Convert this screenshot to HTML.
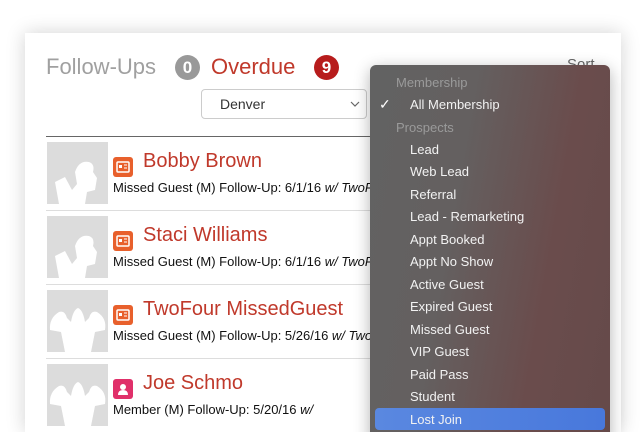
<!DOCTYPE html>
<html style="width:644px;height:432px;overflow:hidden"><head><style>
body{margin:0;width:644px;height:432px;overflow:hidden;background:#fff;font-family:"Liberation Sans",sans-serif;position:relative}
.card{position:absolute;left:25px;top:33px;width:596px;height:399px;background:#fff;box-shadow:0 0 18px rgba(0,0,0,.18)}
.t{position:absolute;top:54px;font-size:22px}
.badge{position:absolute;top:55px;width:25px;height:25px;border-radius:50%;color:#fff;font-weight:bold;font-size:17px;text-align:center;line-height:25px}
.sel{position:absolute;left:201px;top:89px;width:166px;height:30px;border:1px solid #ccc;border-radius:4px;box-sizing:border-box;font-size:14px;color:#333;padding:6px 0 0 18px}
.hr{position:absolute;left:46px;top:136px;width:330px;height:1px;background:#666}
.row{position:absolute;left:46px;width:330px;height:70px}
.img{position:absolute;left:1px;top:0;width:61px;height:62px;background:#dcdcdc;overflow:hidden}
.ic{position:absolute;left:67px;top:15px;width:20px;height:20px;border-radius:3px}
.nm{position:absolute;left:97px;top:8px;font-size:20px;color:#c0392b;white-space:nowrap}
.dt{position:absolute;left:67px;top:38px;font-size:13px;color:#111;white-space:nowrap}
.sep{position:absolute;left:0;top:68px;width:330px;height:1px;background:#ddd}
.menu{position:absolute;left:370px;top:65px;width:240px;height:380px;border-radius:6px;background:linear-gradient(100deg,#626262 0%,#646060 35%,#6a4c4c 70%,#654a4a 100%);box-shadow:0 4px 16px rgba(0,0,0,.3)}
.mi{position:absolute;left:40px;font-size:13px;color:#f2f2f2;white-space:nowrap}
.mh{position:absolute;left:26px;font-size:13px;color:#9a9a9a}
</style></head><body>
<div class="card"></div>
<div class="t" style="left:46px;color:#a0a0a0">Follow-Ups</div>
<div class="badge" style="left:175px;background:#999">0</div>
<div class="t" style="left:211px;color:#c0392b">Overdue</div>
<div class="badge" style="left:314px;background:#b71c1c">9</div>
<div style="position:absolute;left:567px;top:56px;font-size:15px;color:#666">Sort</div>
<div class="sel">Denver<svg style="position:absolute;right:6px;top:11px" width="10" height="6"><path d="M1 1 L5 5 L9 1" stroke="#666" fill="none" stroke-width="1.2"/></svg></div>
<div class="hr"></div>

<div class="row" style="top:142px"><div class="img"><svg width="61" height="62"><path d="M12 62 L8 40 L18 35 L25 48 L30 42 L28 30 Q32 18 42 20 Q48 22 46 30 L50 36 L48 48 L40 50 L38 62Z" fill="#fff"/></svg></div><div class="ic" style="background:#e8602c"><svg width="20" height="20"><rect x="4" y="5" width="12" height="10" rx="1" fill="none" stroke="#fff" stroke-width="1.5"/><rect x="6" y="8" width="3" height="3" fill="#fff"/><path d="M11 8h3M11 11h3" stroke="#fff"/></svg></div><div class="nm">Bobby Brown</div><div class="dt">Missed Guest (M) Follow-Up: 6/1/16 <i>w/ TwoFour</i></div><div class="sep"></div></div>
<div class="row" style="top:216px"><div class="img"><svg width="61" height="62"><path d="M12 62 L8 40 L18 35 L25 48 L30 42 L28 30 Q32 18 42 20 Q48 22 46 30 L50 36 L48 48 L40 50 L38 62Z" fill="#fff"/></svg></div><div class="ic" style="background:#e8602c"><svg width="20" height="20"><rect x="4" y="5" width="12" height="10" rx="1" fill="none" stroke="#fff" stroke-width="1.5"/><rect x="6" y="8" width="3" height="3" fill="#fff"/><path d="M11 8h3M11 11h3" stroke="#fff"/></svg></div><div class="nm">Staci Williams</div><div class="dt">Missed Guest (M) Follow-Up: 6/1/16 <i>w/ TwoFour</i></div><div class="sep"></div></div>
<div class="row" style="top:290px"><div class="img"><svg width="61" height="62"><path d="M3 40 Q2 28 12 22 Q18 20 20 28 L24 32 Q26 20 31 18 Q36 20 38 32 L42 28 Q44 20 50 22 Q60 28 58 40 L48 42 L44 62 L18 62 L14 42Z" fill="#fff"/></svg></div><div class="ic" style="background:#e8602c"><svg width="20" height="20"><rect x="4" y="5" width="12" height="10" rx="1" fill="none" stroke="#fff" stroke-width="1.5"/><rect x="6" y="8" width="3" height="3" fill="#fff"/><path d="M11 8h3M11 11h3" stroke="#fff"/></svg></div><div class="nm">TwoFour MissedGuest</div><div class="dt">Missed Guest (M) Follow-Up: 5/26/16 <i>w/ TwoFour</i></div><div class="sep"></div></div>
<div class="row" style="top:364px"><div class="img"><svg width="61" height="62"><path d="M3 40 Q2 28 12 22 Q18 20 20 28 L24 32 Q26 20 31 18 Q36 20 38 32 L42 28 Q44 20 50 22 Q60 28 58 40 L48 42 L44 62 L18 62 L14 42Z" fill="#fff"/></svg></div><div class="ic" style="background:#e0306a"><svg width="20" height="20"><circle cx="10" cy="8" r="3" fill="#fff"/><path d="M5 16 Q5 11 10 11 Q15 11 15 16Z" fill="#fff"/></svg></div><div class="nm">Joe Schmo</div><div class="dt">Member (M) Follow-Up: 5/20/16 <i>w/</i></div><div class="sep"></div></div>

<div class="menu">
<div class="mh" style="top:10px">Membership</div>
<div style="position:absolute;left:9px;top:31px;color:#fff;font-size:14px">&#10003;</div>
<div class="mi" style="top:32px">All Membership</div>
<div class="mh" style="top:55px">Prospects</div>
<div class="mi" style="top:77px">Lead</div>
<div class="mi" style="top:99px">Web Lead</div>
<div class="mi" style="top:122px">Referral</div>
<div class="mi" style="top:144px">Lead - Remarketing</div>
<div class="mi" style="top:167px">Appt Booked</div>
<div class="mi" style="top:189px">Appt No Show</div>
<div class="mi" style="top:212px">Active Guest</div>
<div class="mi" style="top:234px">Expired Guest</div>
<div class="mi" style="top:257px">Missed Guest</div>
<div class="mi" style="top:279px">VIP Guest</div>
<div class="mi" style="top:302px">Paid Pass</div>
<div class="mi" style="top:324px">Student</div>
<div style="position:absolute;left:5px;top:343px;width:230px;height:22px;border-radius:4px;background:linear-gradient(90deg,#5a88e0,#4878dc)"></div>
<div class="mi" style="top:347px">Lost Join</div>
</div>
</body></html>
